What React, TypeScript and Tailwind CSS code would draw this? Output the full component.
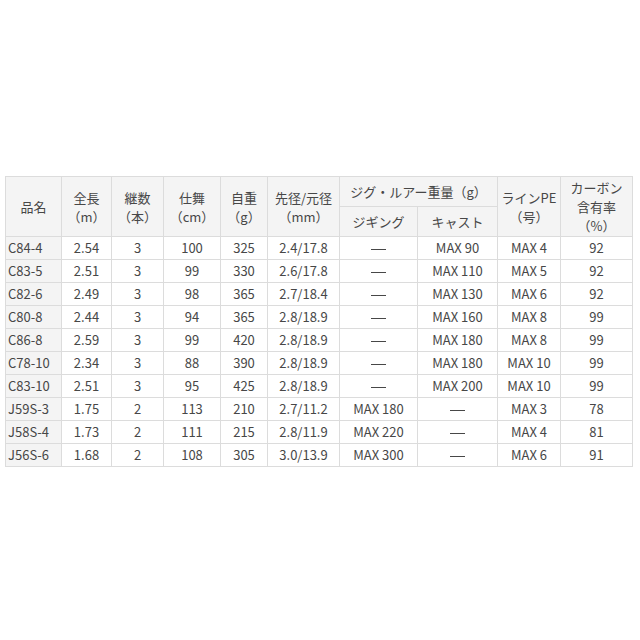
import React from 'react';

const rows = [
  ['C84-4', '2.54', '3', '100', '325', '2.4/17.8', '—', 'MAX 90', 'MAX 4', '92'],
  ['C83-5', '2.51', '3', '99', '330', '2.6/17.8', '—', 'MAX 110', 'MAX 5', '92'],
  ['C82-6', '2.49', '3', '98', '365', '2.7/18.4', '—', 'MAX 130', 'MAX 6', '92'],
  ['C80-8', '2.44', '3', '94', '365', '2.8/18.9', '—', 'MAX 160', 'MAX 8', '99'],
  ['C86-8', '2.59', '3', '99', '420', '2.8/18.9', '—', 'MAX 180', 'MAX 8', '99'],
  ['C78-10', '2.34', '3', '88', '390', '2.8/18.9', '—', 'MAX 180', 'MAX 10', '99'],
  ['C83-10', '2.51', '3', '95', '425', '2.8/18.9', '—', 'MAX 200', 'MAX 10', '99'],
  ['J59S-3', '1.75', '2', '113', '210', '2.7/11.2', 'MAX 180', '—', 'MAX 3', '78'],
  ['J58S-4', '1.73', '2', '111', '215', '2.8/11.9', 'MAX 220', '—', 'MAX 4', '81'],
  ['J56S-6', '1.68', '2', '108', '305', '3.0/13.9', 'MAX 300', '—', 'MAX 6', '91'],
];

const th = 'border border-[#dcdcdc] bg-[#f4f4f4] font-normal text-center align-middle leading-[19px] px-0';
const td = 'border border-[#dcdcdc] text-center align-middle h-[23px] p-0 leading-[22px]';

export default function App() {
  return (
    <div
      className="w-[640px] h-[640px] bg-white pt-[176px] pl-[5px] text-[13px] text-[#474747]"
      style={{ fontFamily: '"Noto Sans CJK JP", "Noto Sans", sans-serif' }}
    >
      <table className="table-fixed border-collapse w-[627px]">
        <colgroup>
          <col className="w-[56px]" />
          <col className="w-[50px]" />
          <col className="w-[52px]" />
          <col className="w-[57px]" />
          <col className="w-[47px]" />
          <col className="w-[72px]" />
          <col className="w-[78px]" />
          <col className="w-[80px]" />
          <col className="w-[63px]" />
          <col className="w-[72px]" />
        </colgroup>
        <thead>
          <tr className="h-[30px]">
            <th rowSpan={2} className={th}>品名</th>
            <th rowSpan={2} className={th}>全長<br />（m）</th>
            <th rowSpan={2} className={th}>継数<br />（本）</th>
            <th rowSpan={2} className={th}>仕舞<br />（cm）</th>
            <th rowSpan={2} className={th}>自重<br />（g）</th>
            <th rowSpan={2} className={th}>先径/元径<br />（mm）</th>
            <th colSpan={2} className={th}>ジグ・ルアー重量（g）</th>
            <th rowSpan={2} className={th}>ラインPE<br />（号）</th>
            <th rowSpan={2} className={th}>カーボン<br />含有率<br />（%）</th>
          </tr>
          <tr className="h-[30px]">
            <th className={th}>ジギング</th>
            <th className={th}>キャスト</th>
          </tr>
        </thead>
        <tbody>
          {rows.map((r) => (
            <tr key={r[0]}>
              {r.map((c, i) => (
                <td
                  key={i}
                  className={
                    i === 0
                      ? `${td} bg-[#f4f4f4] text-left pl-[2px]`
                      : td
                  }
                >
                  {c === '—' ? <span className="inline-block w-[15px] h-px bg-[#474747] align-middle" /> : c}
                </td>
              ))}
            </tr>
          ))}
        </tbody>
      </table>
    </div>
  );
}
